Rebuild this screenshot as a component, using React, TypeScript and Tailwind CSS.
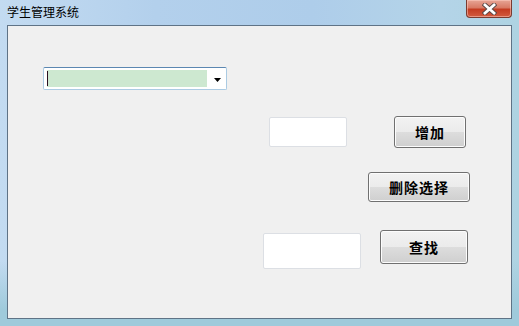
import React from "react";

const cjk = { fontFamily: '"Noto Sans CJK SC", "Noto Sans", sans-serif' };

function Btn({ label, w, h, ml, mt }: { label: string; w: number; h: number; ml: number; mt: number }) {
  return (
    <div
      className="flex items-center justify-center rounded-[3px] border border-[#707070] text-[14px] font-bold text-black shadow-[inset_0_0_0_1px_#fcfcfc]"
      style={{
        width: w,
        height: h,
        marginLeft: ml,
        marginTop: mt,
        background: "linear-gradient(#f2f2f2 0%, #ebebeb 50%, #dddddd 50%, #cfcfcf 100%)",
        ...cjk,
      }}
    >
      <span className="tracking-[1px]">{label}</span>
    </div>
  );
}

function TextBox({ w, h, ml, mt }: { w: number; h: number; ml: number; mt: number }) {
  return (
    <div
      className="rounded-[2px] border border-[#dcdfe4] bg-white"
      style={{ width: w, height: h, marginLeft: ml, marginTop: mt }}
    />
  );
}

export default function App() {
  return (
    <div
      className="flex h-[326px] w-[519px] flex-col overflow-hidden"
      style={{
        background:
          "linear-gradient(180deg, rgba(255,255,255,0) 0%, rgba(255,255,255,0) 80%, #9fcadb 95%), linear-gradient(90deg, #c3dbf1 0%, #b3d0ec 30%, #aecdea 60%, #b4d4e8 85%, #aed3e2 100%)",
      }}
    >
      {/* title bar */}
      <div className="flex h-[25px] items-start">
        <div className="pl-[7px] pt-[3px] text-[12px] leading-[18px] text-black" style={cjk}>
          学生管理系统
        </div>
        <div className="flex-1" />
        <div
          className="mr-[7px] flex h-[18px] w-[46px] items-center justify-center rounded-b-[4px] border border-t-0 border-[#7a3b30] shadow-[inset_0_0_0_1px_rgba(255,210,200,0.5)]"
          style={{ background: "linear-gradient(#e7a596 0%, #d87a65 45%, #c43c22 55%, #d25b3f 100%)" }}
        >
          <svg width="15" height="12" viewBox="0 0 15 12">
            <path d="M3 2 L12 10 M12 2 L3 10" stroke="#5a4846" strokeWidth="4.6" strokeLinecap="square" />
            <path d="M3 2 L12 10 M12 2 L3 10" stroke="#ffffff" strokeWidth="2.8" strokeLinecap="square" />
          </svg>
        </div>
      </div>
      {/* client area */}
      <div className="mx-[7px] h-[294px] border border-[#5f7386] bg-[#f0f0f0]">
        {/* combo */}
        <div className="ml-[35px] mt-[41px] flex h-[23px] w-[184px] items-center rounded-[2px] border border-[#abcbe3] border-t-[#5b87b1] bg-white pl-[3px]">
          <div className="relative h-[17px] w-[160px] bg-[#cde8d0]">
            <div className="absolute left-0 top-[1px] h-[15px] w-[1px] bg-[#2a1020]" />
          </div>
          <div className="flex flex-1 items-center justify-center pl-[2px] pt-[2px]">
            <svg width="8" height="4" viewBox="0 0 8 4">
              <path d="M0 0 H7 L3.5 4 Z" fill="#000" />
            </svg>
          </div>
        </div>
        {/* row 2 */}
        <div className="mt-[26px] flex items-start">
          <TextBox w={78} h={30} ml={261} mt={1} />
          <Btn label="增加" w={72} h={32} ml={47} mt={0} />
        </div>
        {/* row 3 */}
        <div className="mt-[24px] flex items-start">
          <Btn label="删除选择" w={102} h={30} ml={360} mt={0} />
        </div>
        {/* row 4 */}
        <div className="mt-[28px] flex items-start">
          <TextBox w={98} h={36} ml={255} mt={3} />
          <Btn label="查找" w={88} h={34} ml={19} mt={0} />
        </div>
      </div>
    </div>
  );
}
